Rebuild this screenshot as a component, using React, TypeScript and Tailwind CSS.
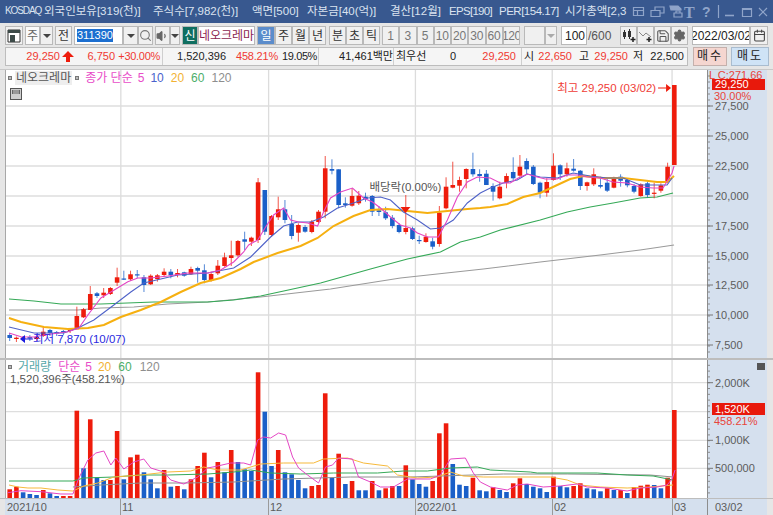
import React from "react";
import { Calendar, Save, Search, Settings, Volume1 } from "lucide-react";

type Candle = [number, number, number, number, "r" | "b"];

// body top, body bottom, wick top, wick bottom, colour (page pixel y)
const candles: Candle[] = [
  [335, 338, 333, 341, "b"], [337.7, 339, 336.5, 342, "r"], [337.5, 339, 336, 341, "r"], [337, 338.5, 335, 341, "b"], [337, 339, 335, 341, "r"],
  [331.7, 336, 327, 337, "r"], [330, 333, 329, 336, "b"], [332, 333.3, 331, 336, "b"], [331, 333, 330, 335, "b"], [329.5, 331, 328, 333, "r"],
  [316, 329.3, 306.7, 329.3, "r"], [309.3, 317.3, 308, 318, "r"], [294, 310, 286, 310, "r"], [293.3, 296, 292, 298, "b"], [292.7, 295.3, 288, 298, "r"],
  [288, 294, 287, 295, "r"], [277.3, 282.7, 267.7, 286, "r"], [278.5, 279.2, 270.7, 280, "b"], [274.3, 279.3, 270.7, 280.7, "r"], [274.3, 275.3, 270, 278, "b"],
  [277.3, 285, 275, 292, "b"], [275.7, 284.3, 274.3, 285, "r"], [275.3, 279, 274, 281.7, "r"], [271.7, 275, 268.3, 276.7, "r"], [271.7, 275, 269, 278.3, "b"],
  [273, 275, 269, 277.3, "r"], [272.3, 275.7, 271.7, 276.7, "b"], [269, 274.3, 266.7, 275, "r"], [268, 270.7, 266.7, 282.7, "b"], [270.3, 280, 264.3, 283.3, "b"],
  [274, 280.7, 271.7, 281.7, "r"], [265.7, 273.3, 260, 275, "r"], [257.3, 266, 252.7, 266.7, "r"], [255.3, 258, 240.7, 266, "r"], [241, 255.3, 240, 256.7, "r"],
  [239.3, 241.7, 231.7, 250, "b"], [237.7, 241.7, 236.7, 246, "r"], [182.3, 240, 178, 243, "r"], [190, 231.7, 190, 235, "b"], [216, 235, 215, 236.7, "r"],
  [209.3, 217.3, 196.7, 220, "r"], [209.3, 220, 200, 223.3, "b"], [224, 236, 215, 239.3, "b"], [225, 232.7, 223.3, 241.7, "r"], [227, 231.7, 225, 232.7, "b"],
  [221.7, 232, 220, 233.3, "r"], [211.7, 222, 210, 223.3, "r"], [168.3, 211.7, 156, 218.3, "r"], [169, 170.7, 159.3, 174.3, "b"], [169.3, 205, 169.3, 208.3, "b"],
  [203.3, 205, 197.3, 207.7, "b"], [196, 205.7, 188.3, 206.7, "r"], [195.7, 203.3, 191, 205, "r"], [196.7, 199, 192.7, 201.7, "b"], [196, 211.7, 195, 216, "b"],
  [210.3, 212, 206, 216, "b"], [212.3, 218.3, 206.7, 220, "b"], [217.7, 226, 215, 228.3, "b"], [225, 232, 223.3, 233.3, "b"], [228, 232, 195, 234.3, "r"],
  [228.3, 239, 226.7, 240, "b"], [240, 241, 235.7, 244, "b"], [236.7, 242, 233.3, 242.7, "r"], [241.3, 246.7, 237.7, 249.3, "b"], [212.7, 244, 206, 246.7, "r"],
  [186.7, 208.3, 177.3, 209.3, "r"], [185, 187.7, 161.7, 188.3, "r"], [180, 185.7, 176.7, 191.7, "r"], [169, 179, 168.3, 188.3, "r"], [169, 174.3, 152.7, 176.7, "b"],
  [174, 176, 169.3, 181.7, "b"], [173.7, 185, 170, 185, "b"], [186, 191.7, 183.3, 200.7, "b"], [186.7, 198.3, 181.7, 199.3, "r"], [176, 182.7, 173.3, 188.3, "r"],
  [172, 178.3, 157.3, 180, "b"], [166.7, 175.7, 155, 176.7, "r"], [161, 169.3, 158.3, 175, "b"], [166.7, 184, 165, 185, "b"], [182.7, 192.7, 181.7, 198.3, "b"],
  [182, 192.7, 178.3, 196.7, "r"], [165.7, 180, 153.3, 180.7, "r"], [165.3, 174.3, 164.3, 180, "b"], [168.3, 174.3, 162.7, 176.7, "r"], [168.7, 170.7, 159, 171.7, "b"],
  [170.7, 186, 170, 190, "b"], [182.3, 186, 181.7, 190.7, "r"], [174.3, 184.3, 168.3, 186, "r"], [185, 186.7, 176.7, 188.3, "b"], [182.7, 190.7, 177.3, 192, "b"],
  [177.7, 187.7, 176.7, 188.3, "r"], [176.7, 180.7, 174.3, 186.7, "b"], [180, 185.3, 178.3, 187.3, "b"], [186, 191.7, 184, 193.3, "b"], [184.3, 196, 183.3, 196.7, "r"],
  [183.3, 195, 181.7, 197.3, "b"], [192.7, 193.5, 182.7, 198.3, "r"], [185.3, 190.7, 183.3, 192.7, "r"], [166.7, 181.7, 162.7, 183.3, "r"], [85, 165, 85, 165, "r"],
];

// bar top, colour (page pixel y), index matches candles
const volumes: [number, "r" | "b"][] = [
  [489.3, "r"], [486.7, "r"], [492.3, "b"], [494, "b"], [495, "b"], [490, "r"], [493.3, "b"], [496, "b"], [496, "r"], [496, "r"],
  [410.7, "r"], [468.3, "b"], [419.3, "r"], [477.3, "b"], [480, "b"], [480, "r"], [431, "r"], [479.3, "b"], [457.3, "r"], [454.7, "r"],
  [472.3, "b"], [479.3, "b"], [488.3, "b"], [470, "r"], [486.7, "b"], [486, "r"], [489.3, "b"], [479.3, "r"], [466, "r"], [452.7, "r"],
  [477.3, "b"], [462, "r"], [472.3, "b"], [450, "r"], [462, "b"], [469.3, "b"], [471, "b"], [372.3, "r"], [411.7, "b"], [466, "b"],
  [450, "r"], [472.3, "b"], [474.3, "b"], [480, "b"], [488.3, "b"], [486, "r"], [485, "r"], [393.3, "r"], [477.7, "b"], [453.7, "r"],
  [484, "b"], [481, "r"], [490.3, "b"], [490.3, "b"], [481, "r"], [490.3, "b"], [488.3, "r"], [486, "r"], [486, "b"], [465.3, "r"],
  [479.3, "b"], [484, "b"], [486.7, "b"], [481, "r"], [433.3, "r"], [423.3, "r"], [464, "b"], [484.7, "b"], [486, "b"], [477.7, "r"],
  [490.3, "b"], [491.3, "b"], [487.3, "r"], [490, "b"], [492, "b"], [483.3, "r"], [478.3, "r"], [484, "b"], [486.7, "b"], [488.3, "b"],
  [492, "b"], [476.7, "r"], [486, "b"], [487.3, "b"], [486, "r"], [483.3, "r"], [488.3, "b"], [489.3, "b"], [491.3, "b"], [488.3, "r"],
  [490, "b"], [490, "r"], [493, "b"], [487, "r"], [485.7, "r"], [484.7, "r"], [485, "b"], [488.3, "b"], [477.7, "r"], [410, "r"],
];

const ma5 = "8,333 20,336.7 33,337 43,335 67,331.7 78,328 87,315 100,298 115,289 127,281.7 137,278 150,278 167,276 187,273 207,273 220,270 233,262 243,252 248,245 257,240 265,227 273,215 283,208 290,220 298,222 307,223 317,226 323,212 330,198 340,192 352,188 363,198 372,202 380,208 390,217 400,225 410,228 417,233 427,237 438,237 447,220 457,197 467,182 477,177 490,178 500,183 510,183 518,178 527,174 537,177 545,179 557,179 567,175 577,175 587,177 600,178 613,182 627,183 640,187 653,188 663,188 672,173 674,166";
const ma10 = "8,327 33,333 63,333 77,328 93,320 113,305 130,292 143,283 160,279 177,275 207,273 233,268 250,257 257,250 270,237 283,226 297,222 310,222 323,217 337,208 353,203 367,198 380,197 390,200 403,212 417,220 430,229 440,228 453,220 467,203 480,193 490,188 503,183 517,180 527,174 540,177 557,178 573,173 590,176 607,178 623,178 640,185 657,185 667,185 672,178";
const ma20 = "8,318 20,322 43,327 67,329 87,328 103,325 120,317 140,310 160,302 180,292 200,283 220,278 240,269 253,262 277,253 300,246 317,238 333,226 353,216 370,210 387,209 407,211 427,213 447,211 467,209 480,208 490,207 507,204 523,197 540,193 557,185 570,179 583,176 603,178 623,178 640,180 657,182 667,182 674,176";
const ma60 = "8,299 33,301 60,304 100,304 153,302 207,302 233,300 260,296 320,283 370,269 407,259 440,252 460,242 480,237 500,230 540,220 567,212 590,207 613,203 640,198 657,197 673,193";
const ma120 = "8,310 77,310 100,308 133,307 167,304 207,302 260,297 330,289 400,278 483,269 540,262 600,255 640,250 674,245";

const vol5 = "7,492.7 20,490.7 40,491.7 60,494 72,494 78,478 87,460 95,453 103,451 110,465 115,458 123,469 133,462 143,459 150,468 163,472 170,480 183,484 197,477 207,468 217,466 230,463 243,463 250,465 257,440 263,437 270,438 278,433 285,435 292,457 298,468 307,475 318,483 325,467 332,465 338,458 352,459 358,477 370,482 380,487 393,487 407,479 430,479 440,475 450,459 465,458 473,473 480,482 490,487 507,490 517,485 527,484 543,487 560,486 577,484 587,487 607,488 627,491 640,488 657,487 667,485 672,479 675,470";
const vol20 = "8,485 17,487 27,488 40,488 57,490 72,491 83,486 97,483 113,477 140,475 167,472 190,471 203,467 217,470 240,470 260,464 283,463 313,463 323,459 347,458 363,463 387,466 397,475 417,478 437,477 450,472 463,476 483,477 520,477 550,477 567,480 580,485 600,487 627,488 650,487 673,485";
const vol60 = "8,481 72,481 83,478 113,477 140,475 167,475 207,474 233,472 250,470 270,473 300,474 333,473 377,473 403,471 427,471 450,468 477,467 490,470 530,472 537,473 597,473 627,475 653,476 673,480";
const vol120 = "72,487 100,485 140,483 187,483 233,482 283,479 350,477 410,477 503,474 567,474 650,475 673,477";

const vGrid = [120, 268, 415, 552, 672];
const priceGrid = [106, 136, 166, 196, 226, 256, 285, 315, 345];
const volGrid = [382.7, 411.7, 440.3, 468.3];
const priceLabels: [string, number][] = [["27,500", 106], ["25,000", 136], ["22,500", 166], ["20,000", 196], ["17,500", 226], ["15,000", 256], ["12,500", 285], ["10,000", 315], ["7,500", 345]];
const volLabels: [string, number][] = [["2,000K", 382.7], ["1,000K", 440.3], ["500,000", 468.3]];

const xOf = (i: number) => 8.7 + i * 6.723;
const RED = "#ee1c0c";
const BLUE = "#1a5fc8";

const btn = "flex h-[19px] shrink-0 items-center justify-center border border-[#b9b9b9] text-[12px]";
const face = "bg-[#f0f0f0] text-[#333]";
const numBtn = "w-[17.25px] bg-[#f0f0f0] text-[11px] text-[#777]";

const DownArrow = () => <span className="h-0 w-0 border-x-[4px] border-t-[4px] border-x-transparent border-t-[#444]" />;

const Ticks = ({ labels, top, bottom, step }: { labels: [string, number][]; top: number; bottom: number; step: number }) => {
  const first = labels[0][1];
  const marks: number[] = [];
  for (let n = -5; first + n * step < bottom; n++) {
    if (first + n * step > top) marks.push(first + n * step);
  }
  return (
    <>
      {marks.map((y, i) => (
        <line key={i} x1={707} x2={710} y1={y} y2={y} stroke="#8a8a8a" />
      ))}
      {labels.map(([t, y]) => (
        <g key={t}>
          <line x1={707} x2={713} y1={y} y2={y} stroke="#777" />
          <text x={715} y={y + 4} fontSize={11} fill="#5c5c5c">{t}</text>
        </g>
      ))}
    </>
  );
};

const App: React.FC = () => {
  return (
    <div className="flex h-[515px] w-[773px] flex-col overflow-hidden bg-[#e6e6e6] font-['Liberation_Sans','Noto_Sans_CJK_KR',sans-serif]">
      {/* title bar */}
      <div className="flex h-[23px] items-center bg-[#38588f] pl-[5px] text-[11.5px] text-[#dbe3f0]">
        <div className="flex w-[622px] overflow-hidden whitespace-nowrap">
          <span className="w-[39px] shrink-0 text-[10px] tracking-[-1.1px]">KOSDAQ</span>
          <span className="w-[109px] shrink-0">외국인보유[319(천)]</span>
          <span className="w-[99px] shrink-0">주식수[7,982(천)]</span>
          <span className="w-[55px] shrink-0">액면[500]</span>
          <span className="w-[83px] shrink-0">자본금[40(억)]</span>
          <span className="w-[59px] shrink-0">결산[12월]</span>
          <span className="w-[50px] shrink-0 tracking-[-0.7px]">EPS[190]</span>
          <span className="w-[66px] shrink-0 tracking-[-0.5px]">PER[154.17]</span>
          <span className="shrink-0">시가총액[2,3</span>
        </div>
        <svg width="146" height="23" viewBox="0 0 146 23" fill="none" stroke="#8fa4c9" strokeWidth="1.2">
          <path d="M6.500 7.500h10v8h-10zM6.500 10.500h10M10.500 10.500v5" />
          <path d="M24 10.500h9v6h-9zM28 10.500V7h9v6h-4" />
          <path d="M43 6h8l3 3v1H44z" fill="#8fa4c9" />
          <path d="M47 13h8v4h-8zM49 13v-2h4v2" />
          <text x="57" y="18" fontSize="16" fontFamily="Liberation Serif" fontWeight="700" fill="#8fa4c9" stroke="none">T</text>
          <text x="75" y="17" fontSize="14" fontWeight="700" fill="#8fa4c9" stroke="none">?</text>
          <path d="M91.500 5v13" />
          <path d="M98 15.500h9" strokeWidth="1.600" />
          <path d="M115.500 8.500h9v8h-9zM115.500 9.500h9" />
          <path d="M132 8l8 8M140 8l-8 8" />
        </svg>
      </div>

      {/* toolbar */}
      <div className="flex h-[23px] items-end pl-[5px]">
        <div className={`${btn} ${face} w-[18px]`}>
          <svg width="14" height="14" viewBox="0 0 14 14"><path d="M1 1h12v12H1z" fill="#fff" stroke="#333" /><path d="M1 1h12v3H1zM3 6h5v7H3z" fill="#3c4a48" /></svg>
        </div>
        <div className={`${btn} ml-[2px] w-[15px] bg-[#fafafa] text-[#666]`}>주</div>
        <div className={`${btn} ${face} w-[13px]`}><DownArrow /></div>
        <div className={`${btn} ${face} ml-[2px] w-[17px]`}>전</div>
        <div className={`${btn} ml-[2px] w-[49px] justify-start bg-white pl-[2px]`}>
          <span className="bg-[#1c6fd0] text-[11px] leading-[13px] text-white">311390</span>
        </div>
        <div className={`${btn} ${face} w-[15px]`}><DownArrow /></div>
        <div className={`${btn} ${face} w-[15px]`}><Search size={13} color="#777" strokeWidth={2} /></div>
        <div className={`${btn} ${face} ml-[2px] w-[15px]`}><Volume1 size={14} color="#666" fill="#666" strokeWidth={2} /></div>
        <div className={`${btn} ${face} w-[10px]`}><DownArrow /></div>
        <div className={`${btn} ml-[2px] w-[16px] bg-[#0f6e60] text-white`}>신</div>
        <div className={`${btn} w-[57px] overflow-hidden whitespace-nowrap bg-white text-[#8c1d50]`}>네오크레마</div>
        <div className={`${btn} ml-[2px] w-[18px] bg-[#5b8ccb] text-white`}>일</div>
        <div className={`${btn} ${face} w-[17px]`}>주</div>
        <div className={`${btn} ${face} w-[17px]`}>월</div>
        <div className={`${btn} ${face} w-[17px]`}>년</div>
        <div className={`${btn} ${face} ml-[3px] w-[17px]`}>분</div>
        <div className={`${btn} ${face} w-[17px]`}>초</div>
        <div className={`${btn} ${face} w-[17px]`}>틱</div>
        <div className={`${btn} ${numBtn} ml-[2px]`}>1</div>
        <div className={`${btn} ${numBtn}`}>3</div>
        <div className={`${btn} ${numBtn}`}>5</div>
        <div className={`${btn} ${numBtn}`}>10</div>
        <div className={`${btn} ${numBtn}`}>20</div>
        <div className={`${btn} ${numBtn}`}>30</div>
        <div className={`${btn} ${numBtn}`}>60</div>
        <div className={`${btn} ${numBtn} overflow-hidden tracking-[-0.5px]`}>120</div>
        <div className={`${btn} ${face} ml-[4px] w-[21px]`} />
        <div className={`${btn} ${face} w-[12px]`}><span className="h-0 w-0 border-x-[4px] border-t-[4px] border-x-transparent border-t-[#aaa]" /></div>
        <div className={`${btn} ml-[4px] w-[26px] justify-end bg-white pr-[1px] text-[#222]`}>100</div>
        <div className="flex h-[19px] w-[33px] shrink-0 items-center pl-[1px] text-[12px] text-[#555]">/600</div>
        <div className={`${btn} ${face} w-[17px]`}>
          <svg width="15" height="15" viewBox="0 0 15 15"><path d="M2 4h3v5H2zM7 3h3v6H7z" fill="#333" /><path d="M3.500 2v9M8.500 1v10" stroke="#333" /><path d="M12 9v5M9.500 11.500h5" stroke="#222" strokeWidth="1.500" /></svg>
        </div>
        <div className={`${btn} ${face} w-[17px]`}>
          <svg width="15" height="15" viewBox="0 0 15 15" fill="none"><path d="M1 4l4 4 3-3 5 4" stroke="#888" /><path d="M11 9v5M8.500 11.500h5" stroke="#222" strokeWidth="1.500" /></svg>
        </div>
        <div className={`${btn} ${face} w-[17px]`}><Save size={14} color="#555" strokeWidth={1.8} /></div>
        <div className={`${btn} ${face} w-[17px]`}><Settings size={13} color="#666" fill="#666" strokeWidth={2} /></div>
        <div className={`${btn} ml-[4px] w-[58px] overflow-hidden whitespace-nowrap bg-white text-[11px] text-[#222]`}>2022/03/02</div>
        <div className={`${btn} ${face} w-[18px]`}><Calendar size={13} color="#444" /></div>
      </div>

      {/* quote row */}
      <div className="mt-[2px] flex h-[19px] pl-[5px] text-[11px] leading-[17px]">
        <div className="flex w-[683px] whitespace-nowrap border border-[#bdbdbd] bg-[#f5f5f5] text-[#222]">
          <div className="flex w-[157px] shrink-0 items-center border-r border-[#cfcfcf] text-[#f03a32]">
            <span className="w-[54px] text-right">29,250</span>
            <svg className="ml-[2px]" width="12" height="11" viewBox="0 0 12 11"><path d="M6 0l6 6H8v5H4V6H0z" fill={RED} /></svg>
            <span className="w-[41px] text-right">6,750</span>
            <span className="w-[45px] text-right tracking-[-0.3px]">+30.00%</span>
          </div>
          <div className="flex w-[156px] shrink-0 items-center border-r border-[#cfcfcf]">
            <span className="w-[63px] text-right">1,520,396</span>
            <span className="w-[52px] text-right tracking-[-0.2px] text-[#f03a32]">458.21%</span>
            <span className="w-[39px] text-right tracking-[-0.4px]">19.05%</span>
          </div>
          <div className="flex w-[75px] shrink-0 items-center justify-end border-r border-[#cfcfcf]">41,461백만</div>
          <div className="flex w-[128px] shrink-0 items-center border-r border-[#cfcfcf]">
            <span className="ml-[2px] w-[34px]">최우선</span>
            <span className="w-[26px] text-right">0</span>
            <span className="w-[60px] text-right text-[#f03a32]">29,250</span>
          </div>
          <div className="flex items-center">
            <span className="ml-[2px] w-[10px]">시</span>
            <span className="w-[38px] text-right text-[#f03a32]">22,650</span>
            <span className="ml-[7px] w-[10px]">고</span>
            <span className="w-[39px] text-right text-[#f03a32]">29,250</span>
            <span className="ml-[5px] w-[10px]">저</span>
            <span className="w-[41px] text-right">22,500</span>
          </div>
        </div>
        <div className="ml-[5px] flex w-[34px] items-center justify-center border border-[#c4b0ac] bg-[#f5d6d0] text-[12px] tracking-[2px] text-[#222]">매수</div>
        <div className="ml-[4px] flex w-[38px] items-center justify-center border border-[#a9bccf] bg-[#cfe3f6] text-[12px] tracking-[2px] text-[#222]">매도</div>
      </div>

      {/* charts */}
      <div className="mt-[3px] flex flex-1 flex-col border-t border-[#c8c8c8]">
        {/* price panel */}
        <div className="relative flex h-[288px] shrink-0 pl-[5px]">
          <svg className="block h-[288px] w-[702px] border-l border-[#a8a8a8] bg-white" viewBox="5 70 702 288" preserveAspectRatio="none">
            {priceGrid.map((y) => <line key={y} x1={5} x2={707} y1={y} y2={y} stroke="#dedede" strokeWidth={1.3} />)}
            {vGrid.map((x) => <line key={x} x1={x} x2={x} y1={70} y2={358} stroke="#dcdcdc" strokeWidth={1.3} />)}
            <polyline points={ma120} fill="none" stroke="#9a9a9a" strokeWidth={1.1} />
            <polyline points={ma60} fill="none" stroke="#35a957" strokeWidth={1.2} />
            {candles.map(([t, b, hi, lo, c], i) => {
              const x = xOf(i);
              const col = c === "r" ? RED : BLUE;
              return (
                <g key={i}>
                  <line x1={x} x2={x} y1={hi} y2={lo} stroke={col} strokeOpacity={0.75} />
                  <rect x={x - 2.3} y={t} width={4.6} height={Math.max(b - t, 1.2)} fill={col} />
                </g>
              );
            })}
            <polyline points={ma20} fill="none" stroke="#f6b010" strokeWidth={2} />
            <polyline points={ma10} fill="none" stroke="#4f62c8" strokeWidth={1.1} />
            <polyline points={ma5} fill="none" stroke="#e445c4" strokeWidth={1.1} />
            <text x={369} y={191} fontSize={11.5} fill="#555">배당락(0.00%)</text>
            <path d="M400 207h10l-5 6z" fill={RED} />
            <text x={557} y={92} fontSize={11.5} fill="#ef3c36">최고 29,250 (03/02)</text>
            <path d="M658 88h8" stroke={RED} />
            <path d="M666 84l5 4-5 4z" fill={RED} />
            <text x={32} y={343} fontSize={11.5} fill="#2a2ae0">최저 7,870 (10/07)</text>
            <path d="M24 339h8" stroke="#1a1ae0" />
            <path d="M24 335l-5 4 5 4z" fill="#1a1ae0" />
          </svg>
          <div className="relative h-[288px] w-[60px] bg-[#d5e0ee]">
            <svg className="block h-[288px] w-[60px]" viewBox="707 70 60 288">
              <line x1={707.5} x2={707.5} y1={70} y2={358} stroke="#8d8d8d" />
              <Ticks labels={priceLabels} top={70} bottom={358} step={6} />
            </svg>
            <div className="absolute left-[2px] top-[-1px] text-[11px] leading-[12px] text-[#e8443a]">L C:271.66</div>
            <div className="absolute left-[5px] top-[9px] h-[11px] w-[53px] bg-[#e8190c] pl-[3px] text-[11px] leading-[11px] text-white">29,250</div>
            <div className="absolute left-[7px] top-[20px] text-[11px] leading-[12px] text-[#e8443a]">30.00%</div>
          </div>
          <div className="absolute left-[8px] top-[1px] flex items-center text-[12px] leading-[14px]">
            <span className="h-[4px] w-[4px] border border-[#777] bg-[#bbb]" />
            <span className="ml-[3px] bg-[#eeeeee] px-[1px] text-[#555]">네오크레마</span>
            <span className="ml-[3px] h-[4px] w-[4px] border border-[#777] bg-[#bbb]" />
            <span className="ml-[6px] text-[#e84cc8]">종가 단순</span>
            <span className="ml-[5px] text-[#e84cc8]">5</span>
            <span className="ml-[6px] text-[#4a62cc]">10</span>
            <span className="ml-[7px] text-[#f2b233]">20</span>
            <span className="ml-[7px] text-[#4cae6a]">60</span>
            <span className="ml-[7px] text-[#8e8e8e]">120</span>
          </div>
          <div className="absolute left-[10px] top-[18px] h-[12px] w-[12px] border border-[#555] bg-[#cfcfcf] p-[1px]">
            <div className="h-[4px] border-x border-[#666] bg-[#999]" />
          </div>
        </div>

        {/* separator */}
        <div className="h-[2px] shrink-0 bg-[#bdbdbd]" />

        {/* volume panel */}
        <div className="relative flex h-[138px] shrink-0 pl-[5px]">
          <svg className="block h-[138px] w-[702px] border-l border-[#a8a8a8] bg-white" viewBox="5 360 702 138" preserveAspectRatio="none">
            {volGrid.map((y) => <line key={y} x1={5} x2={707} y1={y} y2={y} stroke="#dedede" strokeWidth={1.3} />)}
            {vGrid.map((x) => <line key={x} x1={x} x2={x} y1={360} y2={498} stroke="#dcdcdc" strokeWidth={1.3} />)}
            {volumes.map(([t, c], i) => (
              <rect key={i} x={xOf(i) - 2.3} y={t} width={4.6} height={498 - t} fill={c === "r" ? RED : BLUE} />
            ))}
            <polyline points={vol120} fill="none" stroke="#8f8f8f" strokeWidth={1} />
            <polyline points={vol60} fill="none" stroke="#35a957" strokeWidth={1} />
            <polyline points={vol20} fill="none" stroke="#f6b93a" strokeWidth={1} />
            <polyline points={vol5} fill="none" stroke="#e445c4" strokeWidth={1} />
          </svg>
          <div className="relative h-[138px] w-[60px] bg-[#d5e0ee]">
            <svg className="block h-[138px] w-[60px]" viewBox="707 360 60 138">
              <line x1={707.5} x2={707.5} y1={360} y2={498} stroke="#8d8d8d" />
              <Ticks labels={volLabels} top={360} bottom={498} step={5.8} />
            </svg>
            <div className="absolute right-[2px] top-[3px] h-[7px] w-[8px] bg-[#555]" />
            <div className="absolute left-[5px] top-[43px] h-[12px] w-[53px] bg-[#e8190c] pl-[3px] text-[11px] leading-[12px] text-white">1,520K</div>
            <div className="absolute left-[7px] top-[55px] text-[11px] leading-[12px] text-[#e8443a]">458.21%</div>
          </div>
          <div className="absolute left-[8px] top-[1px] flex items-center text-[12px] leading-[12px]">
            <span className="h-[4px] w-[4px] border border-[#777] bg-[#bbb]" />
            <span className="ml-[6px] text-[#55a8a8]">거래량</span>
            <span className="ml-[7px] text-[#e84cc8]">단순</span>
            <span className="ml-[5px] text-[#e84cc8]">5</span>
            <span className="ml-[6px] text-[#f2b233]">20</span>
            <span className="ml-[7px] text-[#4cae6a]">60</span>
            <span className="ml-[8px] text-[#8e8e8e]">120</span>
          </div>
          <div className="absolute left-[10px] top-[13px] text-[11.5px] leading-[12px] text-[#555]">1,520,396주(458.21%)</div>
        </div>

        {/* date axis */}
        <div className="flex flex-1 border-t border-[#bdbdbd] pl-[5px] text-[11px] leading-[16px] text-[#5c5c5c]">
          <div className="flex h-full w-[702px] bg-[#d5e0ee]">
            <div className="w-[115px] pl-[2px]">2021/10</div>
            <div className="w-[148px] border-l border-[#9a9a9a] pl-[1px]">11</div>
            <div className="w-[147px] border-l border-[#9a9a9a] pl-[1px]">12</div>
            <div className="w-[137px] border-l border-[#9a9a9a] pl-[1px]">2022/01</div>
            <div className="w-[120px] border-l border-[#9a9a9a] pl-[1px]">02</div>
            <div className="w-[35px] border-l border-[#9a9a9a] pl-[1px]">03</div>
          </div>
          <div className="h-full w-[60px] border-l border-[#8d8d8d] bg-[#d5e0ee] pl-[7px]">03/02</div>
        </div>
      </div>
    </div>
  );
};

export default App;
